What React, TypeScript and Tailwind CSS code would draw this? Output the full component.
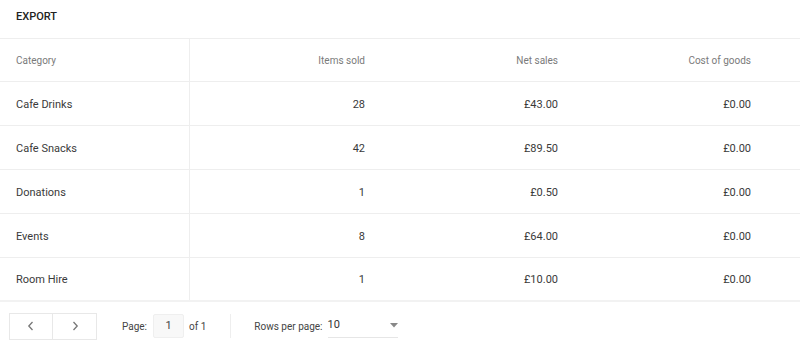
import React from "react";

const rows = [
  { category: "Cafe Drinks", sold: "28", net: "£43.00", cost: "£0.00" },
  { category: "Cafe Snacks", sold: "42", net: "£89.50", cost: "£0.00" },
  { category: "Donations", sold: "1", net: "£0.50", cost: "£0.00" },
  { category: "Events", sold: "8", net: "£64.00", cost: "£0.00" },
  { category: "Room Hire", sold: "1", net: "£10.00", cost: "£0.00" },
];

const cols = "grid grid-cols-[190px_191px_193px_193px_1fr]";

const Chevron = ({ dir }: { dir: "left" | "right" }) => (
  <svg width="12" height="12" viewBox="0 0 12 12" fill="none" stroke="#777" strokeWidth="1.3">
    {dir === "left" ? <path d="M7.5 2 3.8 6l3.7 4" /> : <path d="M4.5 2 8.2 6 4.5 10" />}
  </svg>
);

const App = () => {
  return (
    <div className="w-[800px] h-[350px] bg-white text-[11px] text-[#3a3a3a] font-['Roboto',sans-serif]">
      <div className="h-[39px] pt-[10px] px-4 leading-[14px] border-b border-[#eee] font-medium text-[#222]">
        EXPORT
      </div>

      <div className={`${cols} h-[43px] items-center border-b border-[#eee] text-[10px] text-[#7a7a7a]`}>
        <div className="h-full flex items-center pl-4 border-r border-[#eee]">Category</div>
        <div className="pr-4 text-right">Items sold</div>
        <div className="pr-4 text-right">Net sales</div>
        <div className="pr-4 text-right">Cost of goods</div>
        <div />
      </div>

      {rows.map((row, i) => (
        <div
          key={row.category}
          className={`${cols} h-[44px] items-center pt-[3px] border-b ${i === rows.length - 1 ? "border-b-2 border-[#f2f2f2]" : "border-[#eee]"}`}
        >
          <div className="-mt-[3px] h-[calc(100%+3px)] flex items-center pt-[3px] pl-4 border-r border-[#eee]">{row.category}</div>
          <div className="pr-4 text-right">{row.sold}</div>
          <div className="pr-4 text-right">{row.net}</div>
          <div className="pr-4 text-right">{row.cost}</div>
          <div />
        </div>
      ))}

      <div className="flex items-center h-[48px] pl-[9px] text-[10px] text-[#444]">
        <div className="flex h-[27px] border border-[#e8e8e8]">
          <button className="w-[43px] flex items-center justify-center border-r border-[#e8e8e8]">
            <Chevron dir="left" />
          </button>
          <button className="w-[43px] flex items-center justify-center">
            <Chevron dir="right" />
          </button>
        </div>

        <span className="ml-[25px]">Page:</span>
        <div className="ml-[6px] w-[31px] h-[24px] flex items-center justify-center bg-[#f8f8f8] border border-[#efefef] rounded-[2px] text-[11px]">
          1
        </div>
        <span className="ml-[5px]">of 1</span>

        <div className="ml-[24px] w-px h-[24px] bg-[#eee]" />

        <span className="ml-[23px]">Rows per page:</span>
        <div className="ml-[5px] w-[70px] h-[24px] flex items-center justify-between border-b border-[#e6e6e6] text-[11px] text-[#333]">
          <span>10</span>
          <svg width="8" height="5" viewBox="0 0 8 5">
            <path d="M0 0h8L4 4.5z" fill="#888" />
          </svg>
        </div>
      </div>
    </div>
  );
};

export default App;
